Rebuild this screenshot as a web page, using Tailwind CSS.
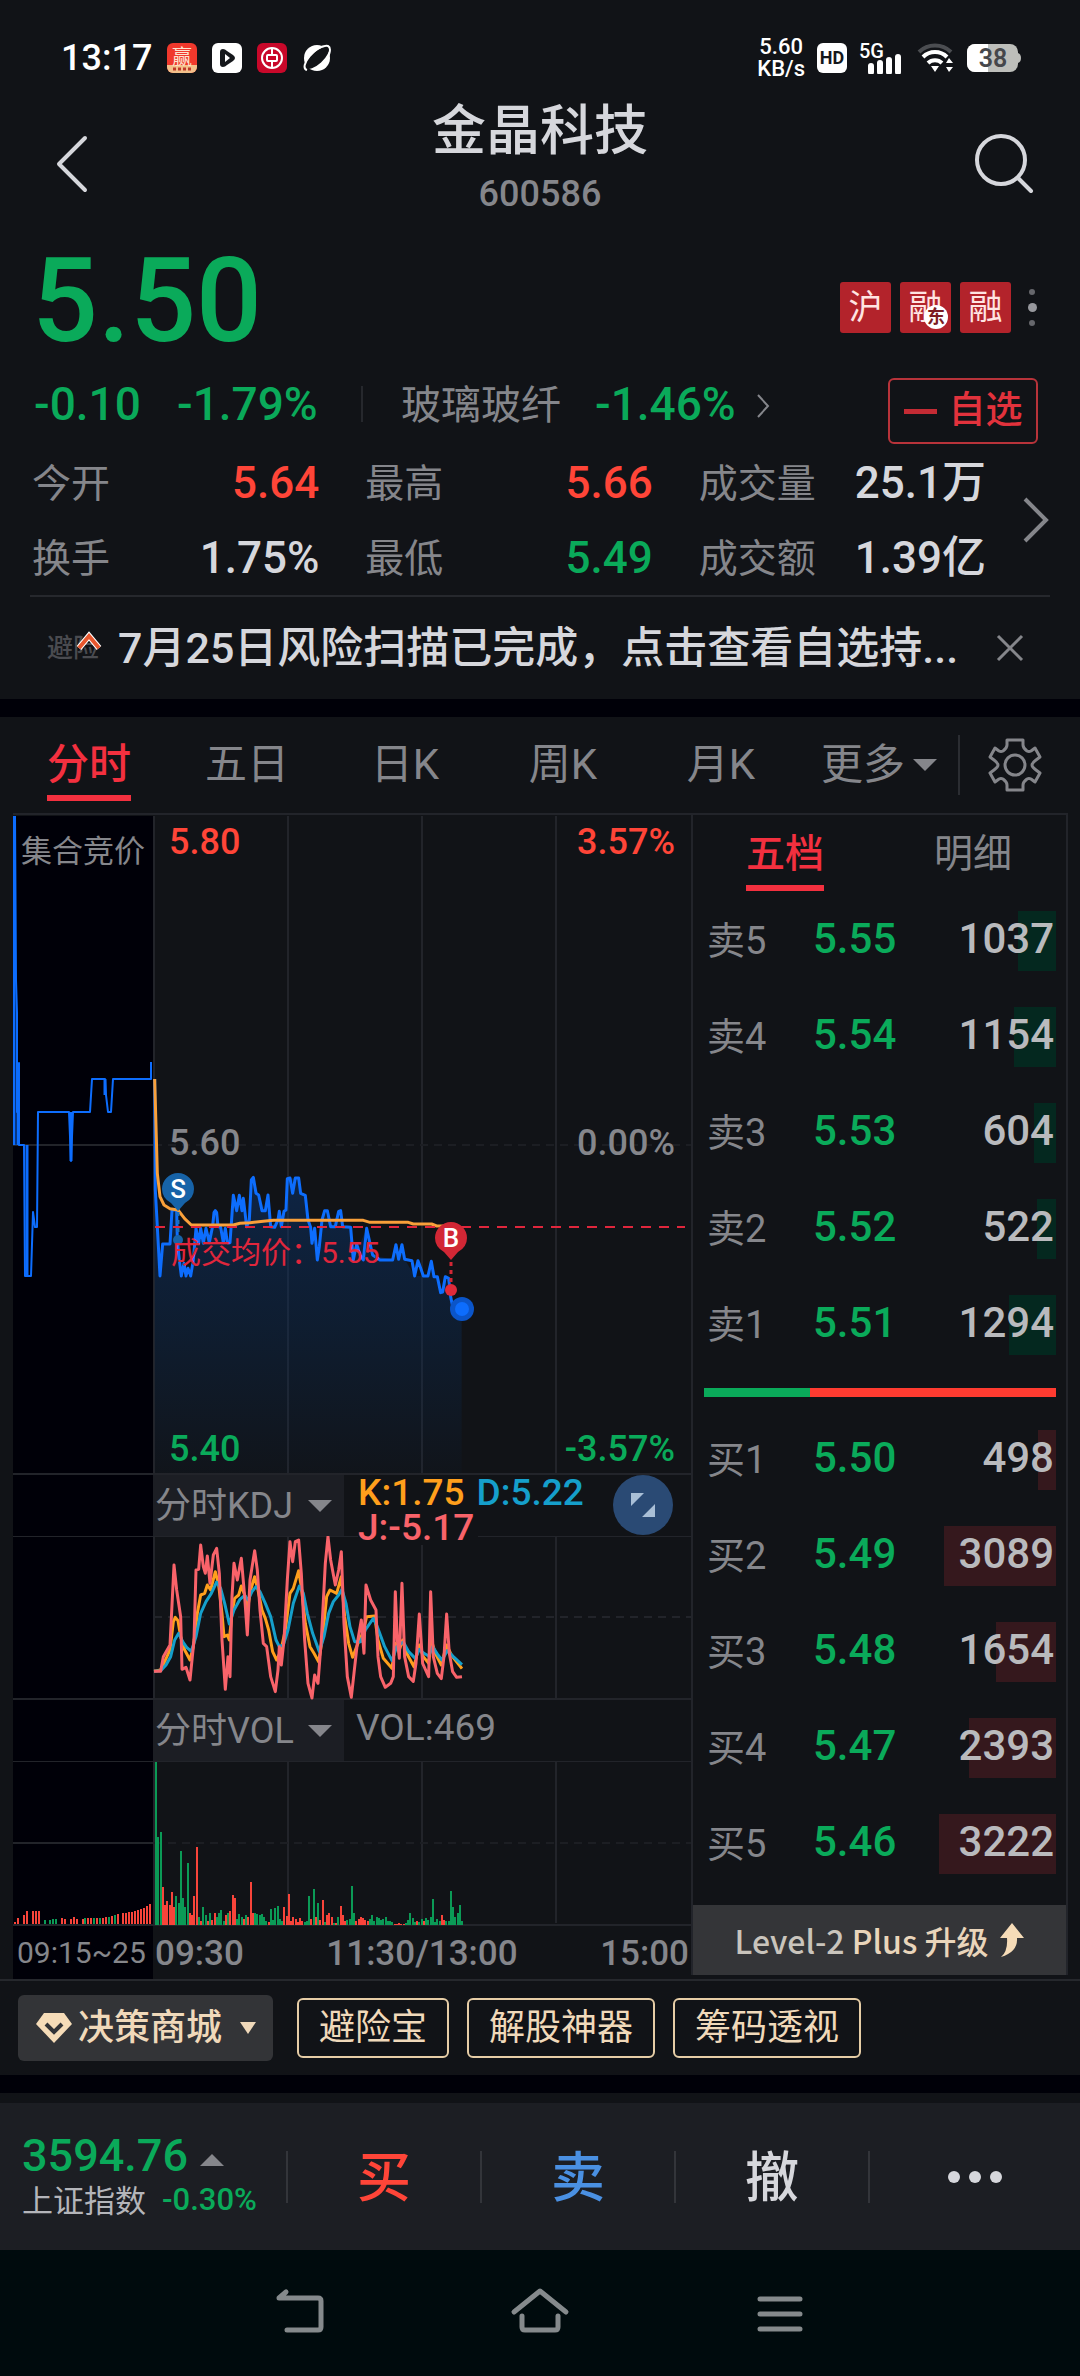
<!DOCTYPE html>
<html lang="zh-CN">
<head>
<meta charset="utf-8">
<meta name="viewport" content="width=device-width, initial-scale=1">
<title>金晶科技 600586</title>
<script src="https://cdn.jsdelivr.net/npm/@tailwindcss/browser@4"></script>
</head>
<body class="flex min-h-screen flex-col bg-[#111317] font-['Roboto','Noto_Sans_CJK_SC',sans-serif] leading-none text-[#d6d7dc]">

<!-- status bar -->
<div class="flex h-[88px] items-center justify-between pt-7 pr-[59px] pl-[61px] text-white">
  <div class="flex items-center gap-[15px]">
    <span class="text-[36px] font-medium">13:17</span>
    <svg class="size-[30px]" viewBox="0 0 30 30"><rect width="30" height="30" rx="6" fill="#f0382c"/><path d="M0 22h30v2a6 6 0 0 1-6 6H6a6 6 0 0 1-6-6z" fill="#f3c08a"/><text x="15" y="21" font-size="20" text-anchor="middle" fill="#fde3cf">赢</text><path d="M6 26h3m2 0h3m2 0h3m2 0h3" stroke="#c0392b" stroke-width="3"/></svg>
    <svg class="size-[30px]" viewBox="0 0 30 30"><rect width="30" height="30" rx="6" fill="#fff"/><path d="M11 6q-3 0-3 3v12q0 3 3 3 2 0 4-2l6-4q4-3 0-6l-6-4q-2-2-4-2z" fill="#15171b"/><path d="M13 11v8l5-4z" fill="#fff"/></svg>
    <svg class="size-[30px]" viewBox="0 0 30 30"><rect width="30" height="30" rx="6" fill="#c9082a"/><g fill="none" stroke="#fff" stroke-width="2"><circle cx="15" cy="15" r="10"/><rect x="10" y="12" width="10" height="6" rx="1"/><path d="M15 5v7m0 6v7"/></g></svg>
    <svg class="size-[30px]" viewBox="0 0 30 30"><circle cx="15" cy="15" r="13" fill="#fff"/><ellipse cx="15" cy="15" rx="15" ry="6" transform="rotate(-42 15 15)" fill="#111317"/><path d="M5 27C-4 24 14 1 26 3c4 2 1 9-1 13" fill="none" stroke="#fff" stroke-width="2"/></svg>
  </div>
  <div class="flex items-center gap-3">
    <div class="text-center text-[22px] leading-[22px] font-medium">5.60<br>KB/s</div>
    <span class="flex size-[30px] items-center justify-center rounded-[6px] bg-white text-[18px] font-bold text-[#15171b]">HD</span>
    <svg class="h-[32px] w-[46px]" viewBox="0 0 46 32"><text x="0" y="16" font-size="20" font-weight="500" fill="#fff">5G</text><path d="M12 30v-6m9 6v-9m9 9V18m9 12V15" stroke="#fff" stroke-width="6" stroke-linecap="round"/></svg>
    <svg class="h-[30px] w-[38px]" viewBox="0 0 38 30" fill="none" stroke="#fff" stroke-width="4"><path d="M2 9a23 23 0 0 1 32 0" stroke="#4b4d51"/><path d="M6 14a17 17 0 0 1 24 0M11 20a10 10 0 0 1 14 0"/><path d="M14 23h8l-4 6zM29 20l3-5 4 5zm0 4h7l-4 5z" fill="#fff" stroke="none"/></svg>
    <svg class="h-[28px] w-[54px]" viewBox="0 0 54 28"><rect width="51" height="28" rx="8" fill="#bdbeba"/><path d="M8 0h13v28H8a8 8 0 0 1-8-8V8a8 8 0 0 1 8-8z" fill="#fff"/><path d="M51 9q3 1 3 5t-3 5z" fill="#bdbeba"/><text x="26" y="23" font-size="25" font-weight="600" text-anchor="middle" fill="#46474b">38</text></svg>
  </div>
</div>

<!-- title bar -->
<header class="grid h-[132px] grid-cols-[120px_1fr_120px]">
  <button class="flex items-center pt-5 pl-[54px]" aria-label="返回"><svg class="h-[60px] w-[36px]" viewBox="0 0 36 60" fill="none" stroke="#d6d7dc" stroke-width="4" stroke-linecap="round" stroke-linejoin="round"><path d="M31 4 5 30l26 26"/></svg></button>
  <div class="flex flex-col items-center gap-[10px] pt-3">
    <h1 class="text-[54px] leading-[64px] font-medium">金晶科技</h1>
    <p class="text-[36px] leading-[40px] font-medium text-[#85868b]">600586</p>
  </div>
  <button class="flex items-center pt-5 pl-[14px]" aria-label="搜索"><svg class="size-[62px]" viewBox="0 0 62 62" fill="none" stroke="#d6d7dc" stroke-width="4" stroke-linecap="round"><circle cx="27" cy="27" r="24"/><path d="m44 45 13 13"/></svg></button>
</header>

<!-- quote summary -->
<section class="pt-[21px]">
  <div class="flex h-[120px] items-center justify-between pr-[36px] pl-8">
    <strong class="text-[116px] font-medium text-[#0aaa5a]">5.50</strong>
    <div class="flex items-center gap-[9px] pt-3 text-[34px] text-[#ffe4e2]">
      <span class="flex size-[51px] items-center justify-center rounded-[3px] bg-[#b3232b]">沪</span>
      <span class="relative flex size-[51px] items-center justify-center rounded-[3px] bg-[#b3232b]">融<i class="absolute right-[3px] bottom-1 flex size-6 items-center justify-center rounded-full bg-white text-[18px] font-bold text-[#7c1c22] not-italic">东</i></span>
      <span class="flex size-[51px] items-center justify-center rounded-[3px] bg-[#b3232b]">融</span>
      <button class="flex w-[24px] flex-col items-center gap-2" aria-label="更多标签"><i class="size-[6px] rounded-full bg-[#66676c]"></i><i class="size-[9px] rounded-full bg-[#97989d]"></i><i class="size-[6px] rounded-full bg-[#66676c]"></i></button>
    </div>
  </div>
  <div class="mt-[17px] flex h-[67px] items-start pr-[42px] pl-[34px] text-[46px] leading-[52px] font-medium text-[#0aaa5a]">
    <span class="w-[143px]">-0.10</span><span class="w-[184px]">-1.79%</span>
    <span class="mt-2 h-[36px] w-[2px] bg-[#26282d]"></span>
    <a href="#" class="flex flex-1 items-center pl-[38px]"><span class="w-[194px] pt-1 text-[40px] leading-[48px] font-normal text-[#85868b]">玻璃玻纤</span>-1.46%<svg class="mt-1 ml-5 h-[26px] w-[14px]" viewBox="0 0 14 26" fill="none" stroke="#85868b" stroke-width="2"><path d="m2 2 10 11L2 24"/></svg></a>
    <button class="flex h-[66px] w-[150px] items-center justify-center gap-3 rounded-[6px] border-2 border-[#b8333a] text-[37px] leading-[40px] font-medium text-[#e2323c]"><i class="h-[5px] w-[33px] bg-[#c42b34]"></i>自选</button>
  </div>
  <div class="flex">
    <dl class="grid flex-1 grid-cols-3 gap-x-[46px] pl-8 text-[44px] [&_dd]:text-right [&_dd]:font-medium [&_dt]:pt-1 [&_dt]:text-[39px] [&_dt]:text-[#85868b] [&>div]:flex [&>div]:h-[75px] [&>div]:items-center [&>div]:justify-between">
      <div><dt>今开</dt><dd class="text-[#ff4538]">5.64</dd></div>
      <div><dt>最高</dt><dd class="text-[#ff4538]">5.66</dd></div>
      <div><dt>成交量</dt><dd>25.1万</dd></div>
      <div><dt>换手</dt><dd>1.75%</dd></div>
      <div><dt>最低</dt><dd class="text-[#0aaa5a]">5.49</dd></div>
      <div><dt>成交额</dt><dd>1.39亿</dd></div>
    </dl>
    <button class="flex w-[94px] items-center pl-[36px]" aria-label="更多行情"><svg class="h-[48px] w-[28px]" viewBox="0 0 28 48" fill="none" stroke="#85868b" stroke-width="4"><path d="m3 3 21 21L3 45"/></svg></button>
  </div>
  <div class="mx-[30px] h-[2px] bg-[#26282d]"></div>
  <div class="flex h-[102px] items-center pr-[56px] pl-[47px]">
    <span class="relative w-[71px] text-[26px] font-medium text-[#4a4b50]">避险<svg class="absolute -top-1 left-[29px] h-[20px] w-[26px]" viewBox="0 0 26 20"><path d="M3 17 13 5l10 12" fill="none" stroke="#fff" stroke-width="6"/><path d="M3 17 13 5l10 12" fill="none" stroke="#e8572e" stroke-width="4"/></svg></span>
    <p class="flex-1 text-[43px] leading-[64px] font-medium whitespace-nowrap">7月25日风险扫描已完成，点击查看自选持...</p>
    <button aria-label="关闭"><svg class="size-[28px]" viewBox="0 0 28 28" stroke="#85868b" stroke-width="3"><path d="m2 2 24 24M26 2 2 26"/></svg></button>
  </div>
</section>
<div class="h-[18px] bg-[#000008]"></div>

<!-- period tabs -->
<nav class="flex h-24 items-center pl-[10px] text-[42px] text-[#85868b]">
  <button class="flex h-full flex-1 justify-center font-medium"><span class="relative flex h-full items-center text-[#f3303f]">分时<i class="absolute bottom-3 left-0 h-[6px] w-full bg-[#f3303f]"></i></span></button>
  <button class="flex-1">五日</button>
  <button class="flex-1">日K</button>
  <button class="flex-1">周K</button>
  <button class="flex-1">月K</button>
  <button class="flex flex-1 items-center justify-center gap-2" aria-haspopup="menu">更多<svg class="h-[12px] w-[24px]" viewBox="0 0 24 12" fill="#85868b"><path d="M0 0h24L12 12z"/></svg></button>
  <span class="h-[60px] w-[2px] bg-[#2b2d32]"></span>
  <button class="w-[120px] pl-[28px]" aria-label="设置"><svg class="size-[54px]" viewBox="0 0 54 54" fill="none" stroke="#85868b" stroke-width="3" stroke-linejoin="round"><path d="M19 2h16v5q0 3 4 6 2 1 4 0l4-3 5 9-4 3q-4 3-4 5t4 5l4 3-5 9-4-3q-2-1-4 0-4 3-4 6v5H19v-5q0-3-4-6-2-1-4 0l-4 3-5-9 4-3q4-3 4-5t-4-5l-4-3 5-9 4 3q2 1 4 0 4-3 4-6z"/><circle cx="27" cy="27" r="10"/></svg></button>
</nav>

<main class="flex items-start pr-3 pl-[13px]">
  <!-- charts -->
  <div class="min-w-0 flex-1">
    <svg class="block h-auto w-full" viewBox="13 813 678 662" fill="none">
      <defs><linearGradient id="area" x1="0" y1="0" x2="0" y2="1"><stop offset="0" stop-color="#0a3a7c" stop-opacity=".45"/><stop offset=".5" stop-color="#0a3060" stop-opacity=".35"/><stop offset="1" stop-color="#0a3060" stop-opacity=".05"/></linearGradient></defs>
      <path d="M13 816h140v658H13z" fill="#000008"/>
      <path d="M13 814h678M154 816v658M288 816v658M422 816v658M556 816v658M13 1474h678M13 1145h140" stroke="#22242a" stroke-width="2"/>
      <path d="M154 1145h537" stroke="#1c1e23" stroke-width="2" stroke-dasharray="8 6"/>
      <g stroke="#0d6dfd" stroke-width="2" stroke-linejoin="round">
        <path d="M14 816v329" stroke-width="3"/>
        <path d="M15 816l1 164 1 33v99l2-49v82h5l1 131h6l2-64 2 15h2l1-115h31l2 49 2-49h17l2-33h13l1 16 2 17h3l2-33h38v-17"/>
        <path d="M18 1063v82M71 1112v49M105 1079v16M27 1145v131" stroke-width="3"/>
      </g>
      <g transform="translate(150 1140) scale(.3333)">
        <path fill="url(#area)" d="M14 150L30 408 38 312 60 312 66 210 80 210 88 360 94 408 122 408 138 265 160 310 188 258 196 212 212 262 240 308 250 166 260 212 268 166 290 260 304 120 310 112 326 165 346 212 354 165 362 260 384 240 408 210 412 116 446 114 452 160 466 166 482 262 502 360 524 212 542 260 570 212 578 260 602 262 610 360 650 265 668 345 728 360 738 314 746 358 756 314 764 358 794 408 834 408 844 364 872 458 886 410 902 470 920 506 935 506V999H14z"/>
        <path stroke="#0d6dfd" stroke-width="9" stroke-linejoin="round" d="M14-183L16 150 30 408 38 312 60 312 66 210 80 210 82 300 88 360 94 408 102 370 108 408 114 385 122 408 130 360 138 265 146 310 152 265 160 310 168 265 178 308 188 258 192 218 196 212 200 218 204 260 212 262 220 308 226 265 232 308 240 308 250 166 260 212 268 166 276 212 280 175 290 260 298 240 304 120 310 112 318 160 326 165 336 212 346 212 354 165 362 260 374 262 384 240 388 214 394 260 402 214 408 210 412 116 420 114 428 160 436 114 446 114 452 160 466 166 474 240 482 262 486 310 494 265 502 360 508 320 516 240 524 212 532 212 542 260 556 260 566 214 572 212 578 260 602 262 610 360 620 312 630 345 640 360 650 265 660 310 668 345 690 360 728 360 738 314 746 358 756 314 764 358 786 362 794 408 804 362 812 384 820 408 834 408 844 364 852 410 862 410 872 458 878 456 886 410 896 415 902 470 908 500 920 506 935 506"/>
        <path stroke="#f9a03a" stroke-width="9" stroke-linejoin="round" d="M14-183L22 100 30 170 42 195 60 206 84 210 104 236 124 255 250 255 270 250 300 248 340 244 370 241 640 241 660 247 775 247 790 252 845 252 860 258 905 258"/>
      </g>
      <path d="M155 1227h530" stroke="#e0263c" stroke-width="2" stroke-dasharray="10 8"/>
      <path d="M178 1212v24" stroke="#1b6fc0" stroke-width="3" stroke-dasharray="4 4"/><circle cx="178" cy="1240" r="5" fill="#1763a8"/>
      <path d="M178 1211l-7-8q-9-5-9-14a16 16 0 0 1 32 0q0 9-9 14z" fill="#1763a8"/>
      <path d="M451 1262v24" stroke="#d22735" stroke-width="3" stroke-dasharray="4 4"/><circle cx="451" cy="1290" r="6" fill="#e02a3a"/>
      <path d="M451 1260l-7-8q-9-5-9-14a16 16 0 0 1 32 0q0 9-9 14z" fill="#d22735"/>
      <circle cx="462" cy="1309" r="12" fill="#0b55c9"/><circle cx="462" cy="1309" r="7" fill="#0d6dfd"/>
      <g fill="#fff" font-size="26" font-weight="500" text-anchor="middle"><text x="178" y="1198">S</text><text x="451" y="1247">B</text></g>
      <text x="21" y="862" font-size="31" fill="#85868b">集合竞价</text>
      <text x="171" y="1263" font-size="30" fill="#e0263c">成交均价：5.55</text>
      <g font-size="36" font-weight="500"><g fill="#ff4538"><text x="169" y="854">5.80</text><text x="675" y="854" text-anchor="end">3.57%</text></g><g fill="#85868b"><text x="169" y="1155">5.60</text><text x="675" y="1155" text-anchor="end">0.00%</text></g><g fill="#0aaa5a"><text x="169" y="1461">5.40</text><text x="675" y="1461" text-anchor="end">-3.57%</text></g></g>
    </svg>

    <div class="flex h-[61px] bg-[#111317]">
      <div class="w-[140px] bg-[#000008]"></div>
      <div class="relative w-[191px] bg-[#1c1e24]">
        <select aria-label="分时指标" class="h-full w-full appearance-none bg-transparent pl-[2px] text-[36px] text-[#85868b]"><option>分时KDJ</option></select>
        <svg class="pointer-events-none absolute top-[25px] right-3 h-[12px] w-[24px]" viewBox="0 0 24 12" fill="#85868b"><path d="M0 0h24L12 12z"/></svg>
      </div>
      <p class="flex flex-1 flex-wrap gap-x-3 pl-[14px] text-[37px] leading-[35px] font-medium whitespace-nowrap"><span class="text-[#ff9f1c]">K:1.75</span><span class="text-[#159fcb]">D:5.22</span><span class="text-[#f9636a]">J:-5.17</span></p>
      <button class="mr-[18px] flex size-[60px] items-center justify-center rounded-full bg-[#2a4a74]" aria-label="展开"><svg class="size-[26px]" viewBox="0 0 26 26" fill="#a9bfd6"><path d="M1 1h13L1 14zM25 25V12L12 25z"/></svg></button>
    </div>

    <svg class="block h-auto w-full" viewBox="13 1536 678 164" fill="none">
      <path d="M13 1536h140v164H13z" fill="#000008"/>
      <path d="M13 1536h345M478 1536h213M154 1536v164M288 1536v162M422 1545v153M556 1536v162M13 1699h678" stroke="#22242a" stroke-width="2"/>
      <path d="M154 1617h537" stroke="#22242a" stroke-width="2" stroke-dasharray="8 6"/>
      <g transform="translate(150 1530) scale(.3333)" stroke-width="9" stroke-linejoin="round">
        <path stroke="#ff9f1c" d="M12 424L32 420 44 395 60 360 70 275 76 262 84 272 92 320 104 360 120 390 130 350 142 250 152 195 164 190 172 165 182 180 196 125 206 165 216 250 222 320 232 315 238 330 246 250 254 205 266 195 274 168 286 200 292 240 302 180 314 140 324 180 336 240 346 265 356 300 368 365 380 390 392 365 406 300 420 190 430 175 446 122 454 170 466 280 480 350 492 370 506 395 518 320 530 200 540 180 560 190 574 140 584 260 596 340 608 382 624 340 638 310 650 260 674 258 684 330 700 385 726 415 736 340 748 360 758 330 770 370 792 410 808 345 820 380 836 400 844 330 856 370 874 405 890 345 904 375 936 416"/>
        <path stroke="#159fcb" d="M12 424L32 422 48 405 62 380 74 330 86 310 98 335 110 352 124 364 138 320 152 250 168 215 184 190 200 156 212 175 224 220 238 282 252 240 270 208 284 196 294 210 306 185 318 170 330 185 346 220 362 260 378 330 388 350 400 345 414 300 430 220 448 168 460 190 472 250 488 310 508 365 522 320 536 250 550 215 566 195 576 178 588 220 600 290 614 335 632 335 646 300 670 265 682 290 704 350 726 392 740 350 760 336 776 365 796 385 808 358 822 370 836 378 848 350 864 375 876 390 892 362 910 380 936 404"/>
        <path stroke="#f9636a" d="M12 424L32 424 40 380 60 345 72 105 80 180 92 260 96 418 108 412 120 450 132 330 138 120 146 118 152 45 160 110 166 130 172 78 180 160 190 75 200 55 208 130 216 330 226 478 234 380 240 440 246 200 252 100 262 150 274 85 284 200 292 315 300 150 314 62 322 120 330 240 340 340 350 350 362 440 376 485 384 420 388 350 394 405 402 330 412 150 420 35 428 95 436 35 446 30 454 130 464 330 474 460 486 504 494 435 504 460 514 330 526 100 534 20 542 90 556 165 566 120 574 65 582 280 592 440 604 502 612 430 622 340 634 270 642 370 648 165 662 210 678 240 684 380 692 440 706 472 722 460 730 440 736 185 742 330 748 385 756 160 764 380 776 440 790 454 798 400 808 252 818 400 836 440 842 185 850 380 862 430 874 446 882 380 890 252 898 370 908 425 920 442 936 440"/>
      </g>
    </svg>

    <div class="flex h-[61px] bg-[#111317]">
      <div class="w-[140px] bg-[#000008]"></div>
      <div class="relative w-[191px] bg-[#1c1e24]">
        <select aria-label="分时成交量指标" class="h-full w-full appearance-none bg-transparent pl-[2px] text-[36px] text-[#85868b]"><option>分时VOL</option></select>
        <svg class="pointer-events-none absolute top-[25px] right-3 h-[12px] w-[24px]" viewBox="0 0 24 12" fill="#85868b"><path d="M0 0h24L12 12z"/></svg>
      </div>
      <p class="pl-3 text-[37px] leading-[56px] text-[#85868b]">VOL:469</p>
    </div>

    <svg class="block h-auto w-full" viewBox="13 1761 678 218" fill="none">
      <path d="M13 1761h140v218H13z" fill="#000008"/>
      <path d="M13 1761h678M154 1761v164M288 1761v162M422 1761v162M556 1761v162M13 1925h678M13 1843h140" stroke="#22242a" stroke-width="2"/>
      <path d="M154 1843h537" stroke="#1c1e23" stroke-width="2" stroke-dasharray="8 6"/>
      <path id="vol-up" stroke="#f8443a" stroke-width="2"/>
      <path id="vol-down" stroke="#0b9a56" stroke-width="2"/>
      <g fill="#85868b" font-size="35" font-weight="500"><text x="17" y="1963" font-size="30" font-weight="400">09:15~25</text><text x="155" y="1965">09:30</text><text x="422" y="1965" text-anchor="middle">11:30/13:00</text><text x="689" y="1965" text-anchor="end">15:00</text></g>
    </svg>
  </div>

  <!-- order book -->
  <aside class="w-[377px] border-x-2 border-t-2 border-[#22242a] text-[42px]">
    <div class="flex h-[78px] justify-between pr-[54px] pl-[53px] text-[39px] text-[#85868b]">
      <button class="font-medium text-[#f3303f]"><span class="relative flex h-full items-center">五档<i class="absolute bottom-[2px] left-0 h-[6px] w-full bg-[#f3303f]"></i></span></button>
      <button>明细</button>
    </div>
    <table class="w-full" aria-label="卖盘"><tbody id="asks"></tbody></table>
    <div class="mt-[15px] mr-[10px] mb-[15px] ml-[11px] flex h-[9px] bg-[#ff3b30]"><i class="bg-[#0aaa5a]" style="width:30%"></i></div>
    <table class="w-full" aria-label="买盘"><tbody id="bids"></tbody></table>
    <a href="#" class="mt-[13px] flex h-[70px] items-center justify-center gap-3 bg-[#343538] font-['Noto_Sans_CJK_SC',sans-serif] text-[32px] font-medium text-[#e9d5bb]"><span><span class="text-[#c9c4bc]">Level-2</span> Plus 升级</span><svg class="h-[34px] w-[24px]" viewBox="0 0 24 34" fill="#f6dcb8"><path d="M12 0l12 15h-7q1 14-16 19 7-6 6-19H0z"/></svg></a>
  </aside>
</main>

<!-- tools -->
<div class="flex h-24 items-center gap-[18px] border-t-2 border-[#26282d] pl-[18px] text-[36px] text-[#f0d9ba] [&>a]:flex [&>a]:h-[60px] [&>a]:items-center [&>a]:rounded-[6px] [&>a]:border-2 [&>a]:border-[#e6cda6] [&>a]:px-5">
  <button class="mr-[6px] flex h-[66px] w-[255px] items-center gap-[6px] rounded-[6px] bg-[#333437] pl-[18px] font-medium"><svg class="h-[32px] w-[36px]" viewBox="0 0 36 32"><path d="M8 1h20l8 11-18 19L0 12z" fill="#f6dcb8"/><path d="m10 12 8 8 8-8" fill="none" stroke="#333437" stroke-width="4"/></svg>决策商城<svg class="ml-3 h-[12px] w-[16px]" viewBox="0 0 16 12" fill="#f0d9ba"><path d="M0 0h16L8 12z"/></svg></button>
  <a href="#">避险宝</a><a href="#">解股神器</a><a href="#">筹码透视</a>
</div>
<div class="h-[18px] bg-[#000008]"></div>
<div class="h-[10px]"></div>

<!-- trade bar -->
<div class="grid h-[147px] grid-cols-[286fr_194fr_194fr_194fr_212fr] items-center bg-[#1c1e23] text-[54px] font-medium [&>button]:flex [&>button]:h-[52px] [&>button]:items-center [&>button]:justify-center [&>button]:border-l-2 [&>button]:border-[#33353a]">
  <a href="#" class="block pl-[22px]">
    <span class="flex items-center gap-3 text-[45px] leading-[50px] text-[#0aaa5a]">3594.76<svg class="mt-2 h-[12px] w-[24px]" viewBox="0 0 24 12" fill="#85868b"><path d="M12 0l12 12H0z"/></svg></span>
    <span class="flex items-center gap-4 text-[31px] leading-[38px] font-normal text-[#b4b5ba]">上证指数<span class="pb-1 font-medium text-[#0aaa5a]">-0.30%</span></span>
  </a>
  <button class="pt-1 text-[#ff4538]">买</button>
  <button class="pt-1 text-[#4a90e2]">卖</button>
  <button class="pt-1">撤</button>
  <button class="gap-[9px]" aria-label="更多"><i class="size-3 rounded-full bg-[#d6d7dc]"></i><i class="size-3 rounded-full bg-[#d6d7dc]"></i><i class="size-3 rounded-full bg-[#d6d7dc]"></i></button>
</div>

<!-- system navigation -->
<nav class="grid min-h-[126px] flex-1 grid-cols-3 items-center bg-[#000b0d] px-[180px] pb-1 [&>button]:flex [&>button]:justify-center [&_svg]:h-[48px] [&_svg]:w-[60px]">
  <button aria-label="返回"><svg viewBox="0 0 60 48" fill="none" stroke="#858a8c" stroke-width="5" stroke-linecap="round" stroke-linejoin="round"><path d="M17 43h31q3 0 3-3V14q0-3-3-3H9l7-6"/></svg></button>
  <button aria-label="主页"><svg viewBox="0 0 60 48" fill="none" stroke="#858a8c" stroke-width="5" stroke-linecap="round" stroke-linejoin="round"><path d="M4 25 30 4l26 21M12 29v11q0 3 3 3h30q3 0 3-3V29"/></svg></button>
  <button aria-label="最近任务"><svg viewBox="0 0 60 48" stroke="#858a8c" stroke-width="5" stroke-linecap="round"><path d="M10 12h40M10 27h40M10 42h40"/></svg></button>
</nav>

<script>
  // Order book levels: label, price, quantity
  const asks = [['卖5','5.55',1037],['卖4','5.54',1154],['卖3','5.53',604],['卖2','5.52',522],['卖1','5.51',1294]];
  const bids = [['买1','5.50',498],['买2','5.49',3089],['买3','5.48',1654],['买4','5.47',2393],['买5','5.46',3222]];
  const row = (bar) => ([label, price, qty]) => `
    <tr class="h-24">
      <th scope="row" class="w-[120px] pl-[14px] text-left text-[38px] font-normal text-[#85868b]">${label}</th>
      <td class="pb-1 font-medium text-[#0aaa5a]">${price}</td>
      <td class="w-[160px] pr-[10px]"><div class="relative flex h-[60px] items-center justify-end pr-[2px] pb-1 font-medium text-[#b9babd]"><i class="absolute inset-y-0 right-0 ${bar}" style="width:${(qty / 3222 * 117).toFixed(0)}px"></i><span class="relative">${qty}</span></div></td>
    </tr>`;
  document.getElementById('asks').innerHTML = asks.map(row('bg-[#04281f]')).join('');
  document.getElementById('bids').innerHTML = bids.map(row('bg-[#35181d]')).join('');

  // Volume bars: positive = up, negative = down
  const vol = [-163,-88,-93,38,20,24,20,33,18,-29,-22,-74,-27,-18,-62,12,10,29,78,-8,4,-18,-10,4,-12,5,12,-8,-12,-15,-4,10,-12,14,30,27,-6,-11,-8,6,-10,8,43,12,-12,-11,-10,-11,-8,-4,3,-16,-5,-17,-19,-6,-4,18,9,31,4,8,6,3,7,4,-3,-4,-29,6,-36,8,-22,5,25,-3,10,12,8,-2,2,-8,19,10,4,-5,-6,-39,-12,4,6,8,7,5,4,-6,-10,-4,-8,-7,-5,-6,-8,-4,-4,-3,1,1,2,1,1,-2,-5,-12,-7,-3,4,-3,-6,4,-7,-5,-8,-26,-3,-6,-4,10,5,-4,-4,-34,-18,-8,-12,-20,-4];
  let up = '', down = '';
  vol.forEach((v, i) => {
    const bar = `M${156 + Math.round(i * 2.25)} 1925v${-Math.abs(v)}`;
    if (v > 0) up += bar; else down += bar;
  });
  // Call auction bars
  const auction = [2,6,0,9,13,0,13,13,13,0,-4,0,-4,-5,-5,0,6,5,0,5,7,5,0,5,-6,6,6,-6,6,-6,6,7,-7,8,-9,10,0,11,11,12,12,13,14,15,16,18,20];
  auction.forEach((v, i) => {
    const bar = `M${15 + i * 3 - Math.floor(i / 12)} 1924v${-Math.abs(v)}`;
    if (v > 0) up += bar; else if (v < 0) down += bar;
  });
  document.getElementById('vol-up').setAttribute('d', up);
  document.getElementById('vol-down').setAttribute('d', down);
</script>
</body>
</html>
